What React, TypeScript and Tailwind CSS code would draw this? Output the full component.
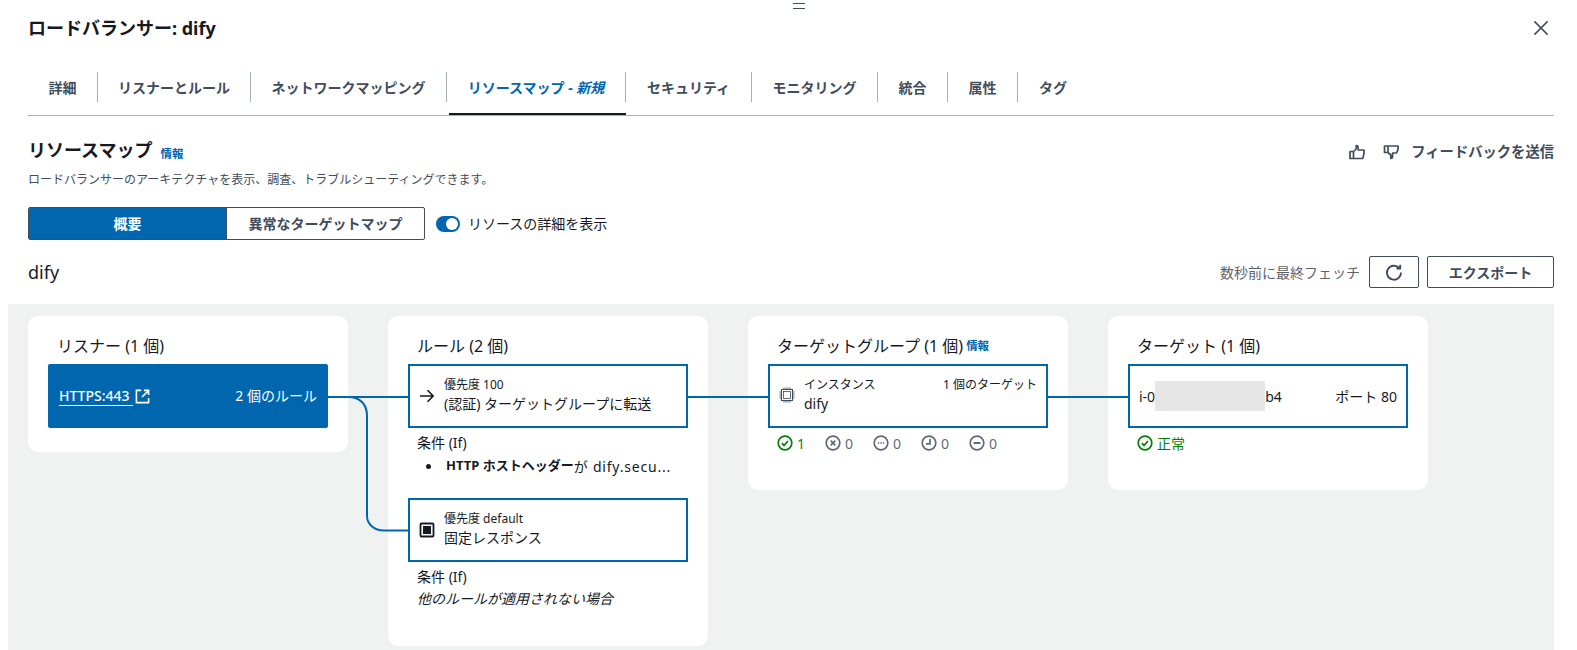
import React from "react";

const BLUE = "#0066ae";

const tabs = [
  { name: "詳細", width: "w-[70px]" },
  { name: "リスナーとルール", width: "w-[153px]" },
  { name: "ネットワークマッピング", width: "w-[196px]" },
  { name: "リソースマップ - 新規", width: "w-[179px]", active: true },
  { name: "セキュリティ", width: "w-[126px]" },
  { name: "モニタリング", width: "w-[126px]" },
  { name: "統合", width: "w-[70px]" },
  { name: "属性", width: "w-[70px]" },
  { name: "タグ", width: "w-[70px]", last: true },
];

const Info = () => <span className="text-[11.5px] font-bold text-[#0066ae]">情報</span>;

const StatusIcon = ({ kind, color }: { kind: string; color: string }) => (
  <svg width="16" height="16" viewBox="0 0 16 16" fill="none" stroke={color} strokeWidth="2" className="shrink-0">
    <circle cx="8" cy="8" r="6.8" strokeWidth="1.7" />
    {kind === "ok" && <path d="M4.8 8.2l2.2 2.2 4-4.4" strokeWidth="1.7" />}
    {kind === "x" && <path d="M5.7 5.7l4.6 4.6M10.3 5.7l-4.6 4.6" strokeWidth="1.7" />}
    {kind === "dots" && <path d="M4.8 8h1.4M7.3 8h1.4M9.8 8h1.4" strokeWidth="1.7" />}
    {kind === "clock" && <path d="M9 3.8v5H5" strokeWidth="1.7" />}
    {kind === "minus" && <path d="M4.5 8h7" strokeWidth="2" />}
  </svg>
);

const Count = ({ kind, value }: { kind: string; value: string }) => (
  <div className="flex w-[48px] items-center gap-[4px] text-[14px] text-[#5f6b7a]">
    <StatusIcon kind={kind} color="#5f6b7a" />
    <span>{value}</span>
  </div>
);

const Card = ({ title, info, className, children }: { title: string; info?: boolean; className: string; children: React.ReactNode }) => (
  <div className={`w-[320px] shrink-0 rounded-[10px] bg-white px-[20px] ${className}`}>
    <div className="flex h-[48px] items-center gap-[3px] pl-[9px] pt-[12px] text-[16px] leading-[20px] text-[#16191f]">
      <span>{title}</span>
      {info && <Info />}
    </div>
    {children}
  </div>
);

const RuleBox = ({ icon, top, bottom }: { icon: React.ReactNode; top: string; bottom: string }) => (
  <div className="flex h-[64px] items-center border-2 border-[#0066ae] bg-white pl-[9px] text-[#16191f]">
    <div className="flex w-[25px] shrink-0 items-center">{icon}</div>
    <div className="pb-[2px]">
      <div className="text-[12px] leading-[16px]">{top}</div>
      <div className="text-[14px] leading-[19px] mt-[1px]">{bottom}</div>
    </div>
  </div>
);

export default function App() {
  return (
    <div className="relative h-[650px] w-full overflow-hidden bg-white font-['Noto_Sans','Noto_Sans_CJK_JP',sans-serif] text-[#16191f]">
      <div className="absolute left-[793px] top-[3px] h-[6px] w-[12px] border-y border-[#414d5c]" />

      <div className="pl-[28px] pr-[23px]">
        <div className="flex h-[72px] items-start justify-between pt-[15px]">
          <h1 className="text-[18px] font-bold leading-[26px]">ロードバランサー: dify</h1>
          <svg width="16" height="16" viewBox="0 0 16 16" fill="none" stroke="#414d5c" strokeWidth="1.5" className="mr-[5px] mt-[5px]">
            <path d="M1.4 1.4l13.2 13.2M14.600 1.4L1.4 14.600" />
          </svg>
        </div>

        <div className="flex h-[44px] border-b border-[#a9b0b4]">
          {tabs.map((tab) => (
            <div key={tab.name} className={`relative h-[43px] ${tab.width}`}>
              <div
                className={`flex h-[30px] items-center justify-center text-[14px] font-bold ${
                  tab.last ? "" : "border-r border-[#a9b0b4]"
                } ${tab.active ? "text-[#0066ae]" : "text-[#414d5c]"}`}
              >
                {tab.active ? (
                  <span>
                    リソースマップ - <em>新規</em>
                  </span>
                ) : (
                  tab.name
                )}
              </div>
              {tab.active && <div className="absolute bottom-0 left-[2px] right-0 h-[2px] bg-[#16191f]" />}
            </div>
          ))}
        </div>

        <div className="flex items-start justify-between pt-[20px]">
          <div>
            <div className="flex items-center gap-[8px]">
              <h2 className="text-[18px] font-bold leading-[28px]">リソースマップ</h2>
              <span className="mt-[3px]"><Info /></span>
            </div>
            <p className="mt-[8px] text-[12px] leading-[16px] text-[#414d5c]">
              ロードバランサーのアーキテクチャを表示、調査、トラブルシューティングできます。
            </p>
          </div>
          <div className="flex items-center pt-[6px] text-[#414d5c]">
            <svg width="16" height="16" viewBox="0 0 16 16" fill="none" stroke="#414d5c" strokeWidth="1.7" strokeLinejoin="round">
              <path d="M1 7.500h3.500V14.500H1zM4.500 7.500L7.200 5V1.500c1.400 0 2 1 2 2.200V6H15v3.500L13.800 14.500H4.500" />
            </svg>
            <svg width="16" height="16" viewBox="0 0 16 16" fill="none" stroke="#414d5c" strokeWidth="1.7" strokeLinejoin="round" className="ml-[18px]">
              <path d="M1.500 2h3.500v6.500H1.500zM5 2h10v3.500l-1.500 3.500H9.600v3.200c0 1.200-.6 2.200-1.800 2.300V11L5 8.500" />
            </svg>
            <span className="ml-[12px] text-[14.3px] font-bold leading-[20px]">フィードバックを送信</span>
          </div>
        </div>

        <div className="mt-[19px] flex h-[33px] items-center">
          <div className="flex h-[33px] w-[397px] overflow-hidden rounded-[2px] border border-[#414d5c] text-[14px] font-bold">
            <div className="flex w-[197px] items-center justify-center bg-[#0066ae] text-white">概要</div>
            <div className="flex flex-1 items-center justify-center border-l border-[#414d5c] text-[#414d5c]">異常なターゲットマップ</div>
          </div>
          <div className="ml-[11px] flex h-[16px] w-[24px] items-center justify-end rounded-full bg-[#0066ae] pr-[2px]">
            <div className="h-[12px] w-[12px] rounded-full bg-white" />
          </div>
          <span className="ml-[8px] text-[14px] leading-[20px] text-[#16191f]">リソースの詳細を表示</span>
        </div>

        <div className="mt-[16px] flex h-[32px] items-center justify-between">
          <span className="text-[18px] leading-[22px] text-[#16191f]">dify</span>
          <div className="flex items-center">
            <span className="text-[14px] text-[#5f6368]">数秒前に最終フェッチ</span>
            <div className="ml-[9px] flex h-[32px] w-[50px] items-center justify-center rounded-[2px] border border-[#414d5c]">
              <svg width="18" height="18" viewBox="0 0 18 18" fill="none" stroke="#414d5c" strokeWidth="1.9">
                <path d="M14.200 5A7 7 0 1 0 16 9.500M15.200 1.800V5.600h-3.800" />
              </svg>
            </div>
            <div className="ml-[8px] flex h-[32px] w-[127px] items-center justify-center rounded-[2px] border border-[#414d5c] text-[14px] font-bold text-[#414d5c]">
              エクスポート
            </div>
          </div>
        </div>
      </div>

      <div className="relative ml-[8px] mt-[16px] flex h-[346px] w-[1546px] items-start gap-[40px] bg-[#f0f2f2] pl-[20px] pt-[12px]">
        <Card title="リスナー (1 個)" className="h-[136px]">
          <div className="flex h-[64px] items-center justify-between rounded-[2px] bg-[#0066ae] px-[11px] text-white">
            <div className="flex items-center gap-[2px]">
              <span className="border-b border-white pr-[3px] text-[14px] font-medium leading-[19px]">HTTPS:443</span>
              <svg width="15" height="15" viewBox="0 0 16 16" fill="none" stroke="white" strokeWidth="1.7">
                <path d="M6.500 1.500H1.500v13H14.500V9.500M9.500 1.500H14.500V6.500M14 2L7.500 8.500" />
              </svg>
            </div>
            <span className="text-[14px] leading-[18px]">2 個のルール</span>
          </div>
        </Card>

        <Card title="ルール (2 個)" className="h-[330px]">
          <RuleBox
            top="優先度 100"
            bottom="(認証) ターゲットグループに転送"
            icon={
              <svg width="16" height="16" viewBox="0 0 16 16" fill="none" stroke="#16191f" strokeWidth="1.600">
                <path d="M1 8h13M8.500 2.200L14.200 8l-5.700 5.800" />
              </svg>
            }
          />
          <div className="pl-[9px] pt-[5px] text-[14px] leading-[19px]">条件 (If)</div>
          <div className="mt-[3px] flex h-[22px] items-center text-[13px]">
            <span className="ml-[18px] h-[5px] w-[5px] rounded-full bg-[#16191f]" />
            <span className="ml-[15px] font-bold">HTTP ホストヘッダー</span>
            <span className="text-[14px] tracking-[0.8px]">が dify.secu...</span>
          </div>
          <div className="mt-[21px]">
            <RuleBox
              top="優先度 default"
              bottom="固定レスポンス"
              icon={
                <svg width="16" height="16" viewBox="0 0 16 16">
                  <rect x="1.500" y="1.500" width="13" height="13" rx="1" fill="none" stroke="#16191f" strokeWidth="1.800" />
                  <rect x="4" y="4" width="8" height="8" fill="#16191f" />
                </svg>
              }
            />
          </div>
          <div className="pl-[9px] pt-[5px] text-[14px] leading-[19px]">条件 (If)</div>
          <div className="mt-[3px] pl-[9px] text-[14px] italic leading-[20px]">他のルールが適用されない場合</div>
        </Card>

        <Card title="ターゲットグループ (1 個)" info className="h-[174px]">
          <div className="flex h-[64px] items-center border-2 border-[#0066ae] bg-white pl-[9px] pr-[9px]">
            <svg width="16" height="16" viewBox="0 0 16 16" fill="none" stroke="#414d5c" className="mb-[2px] shrink-0">
              <rect x="2.500" y="2.500" width="11" height="11" strokeWidth="1" />
              <rect x="4.500" y="4.500" width="7" height="7" strokeWidth="0.800" />
              <path d="M5 .5v2M7 .5v2M9 .5v2M11 .5v2M5 13.500v2M7 13.500v2M9 13.500v2M11 13.500v2M.5 5h2M.5 7h2M.5 9h2M.5 11h2M13.500 5h2M13.500 7h2M13.500 9h2M13.500 11h2" strokeWidth="0.900" />
            </svg>
            <div className="ml-[9px] flex-1 pb-[2px]">
              <div className="flex justify-between text-[12px] leading-[16px]">
                <span>インスタンス</span>
                <span>1 個のターゲット</span>
              </div>
              <div className="mt-[1px] text-[14px] leading-[19px]">dify</div>
            </div>
          </div>
          <div className="mt-[5px] flex h-[20px] items-center pl-[9px]">
            <div className="flex w-[48px] items-center gap-[4px] text-[14px] text-[#037f0c]">
              <StatusIcon kind="ok" color="#037f0c" />
              <span>1</span>
            </div>
            <Count kind="x" value="0" />
            <Count kind="dots" value="0" />
            <Count kind="clock" value="0" />
            <Count kind="minus" value="0" />
          </div>
        </Card>

        <Card title="ターゲット (1 個)" className="h-[174px]">
          <div className="flex h-[64px] items-center justify-between border-2 border-[#0066ae] bg-white pl-[9px] pr-[9px] text-[14px]">
            <div className="flex items-center">
              <span>i-0</span>
              <div className="h-[30px] w-[110px] bg-[#e6e6e6]" />
              <span>b4</span>
            </div>
            <span>ポート 80</span>
          </div>
          <div className="mt-[5px] flex h-[20px] items-center gap-[4px] pl-[9px] text-[14px] text-[#037f0c]">
            <StatusIcon kind="ok" color="#037f0c" />
            <span>正常</span>
          </div>
        </Card>

        <svg className="pointer-events-none absolute left-0 top-0" width="1546" height="346" fill="none" stroke={BLUE} strokeWidth="2">
          <path d="M320 93H400M680 93H760M1040 93H1120" />
          <path d="M340 93C352 93 359 100 359 112V212C359 220 366 226.500 376 226.500H400" />
        </svg>
      </div>
    </div>
  );
}
